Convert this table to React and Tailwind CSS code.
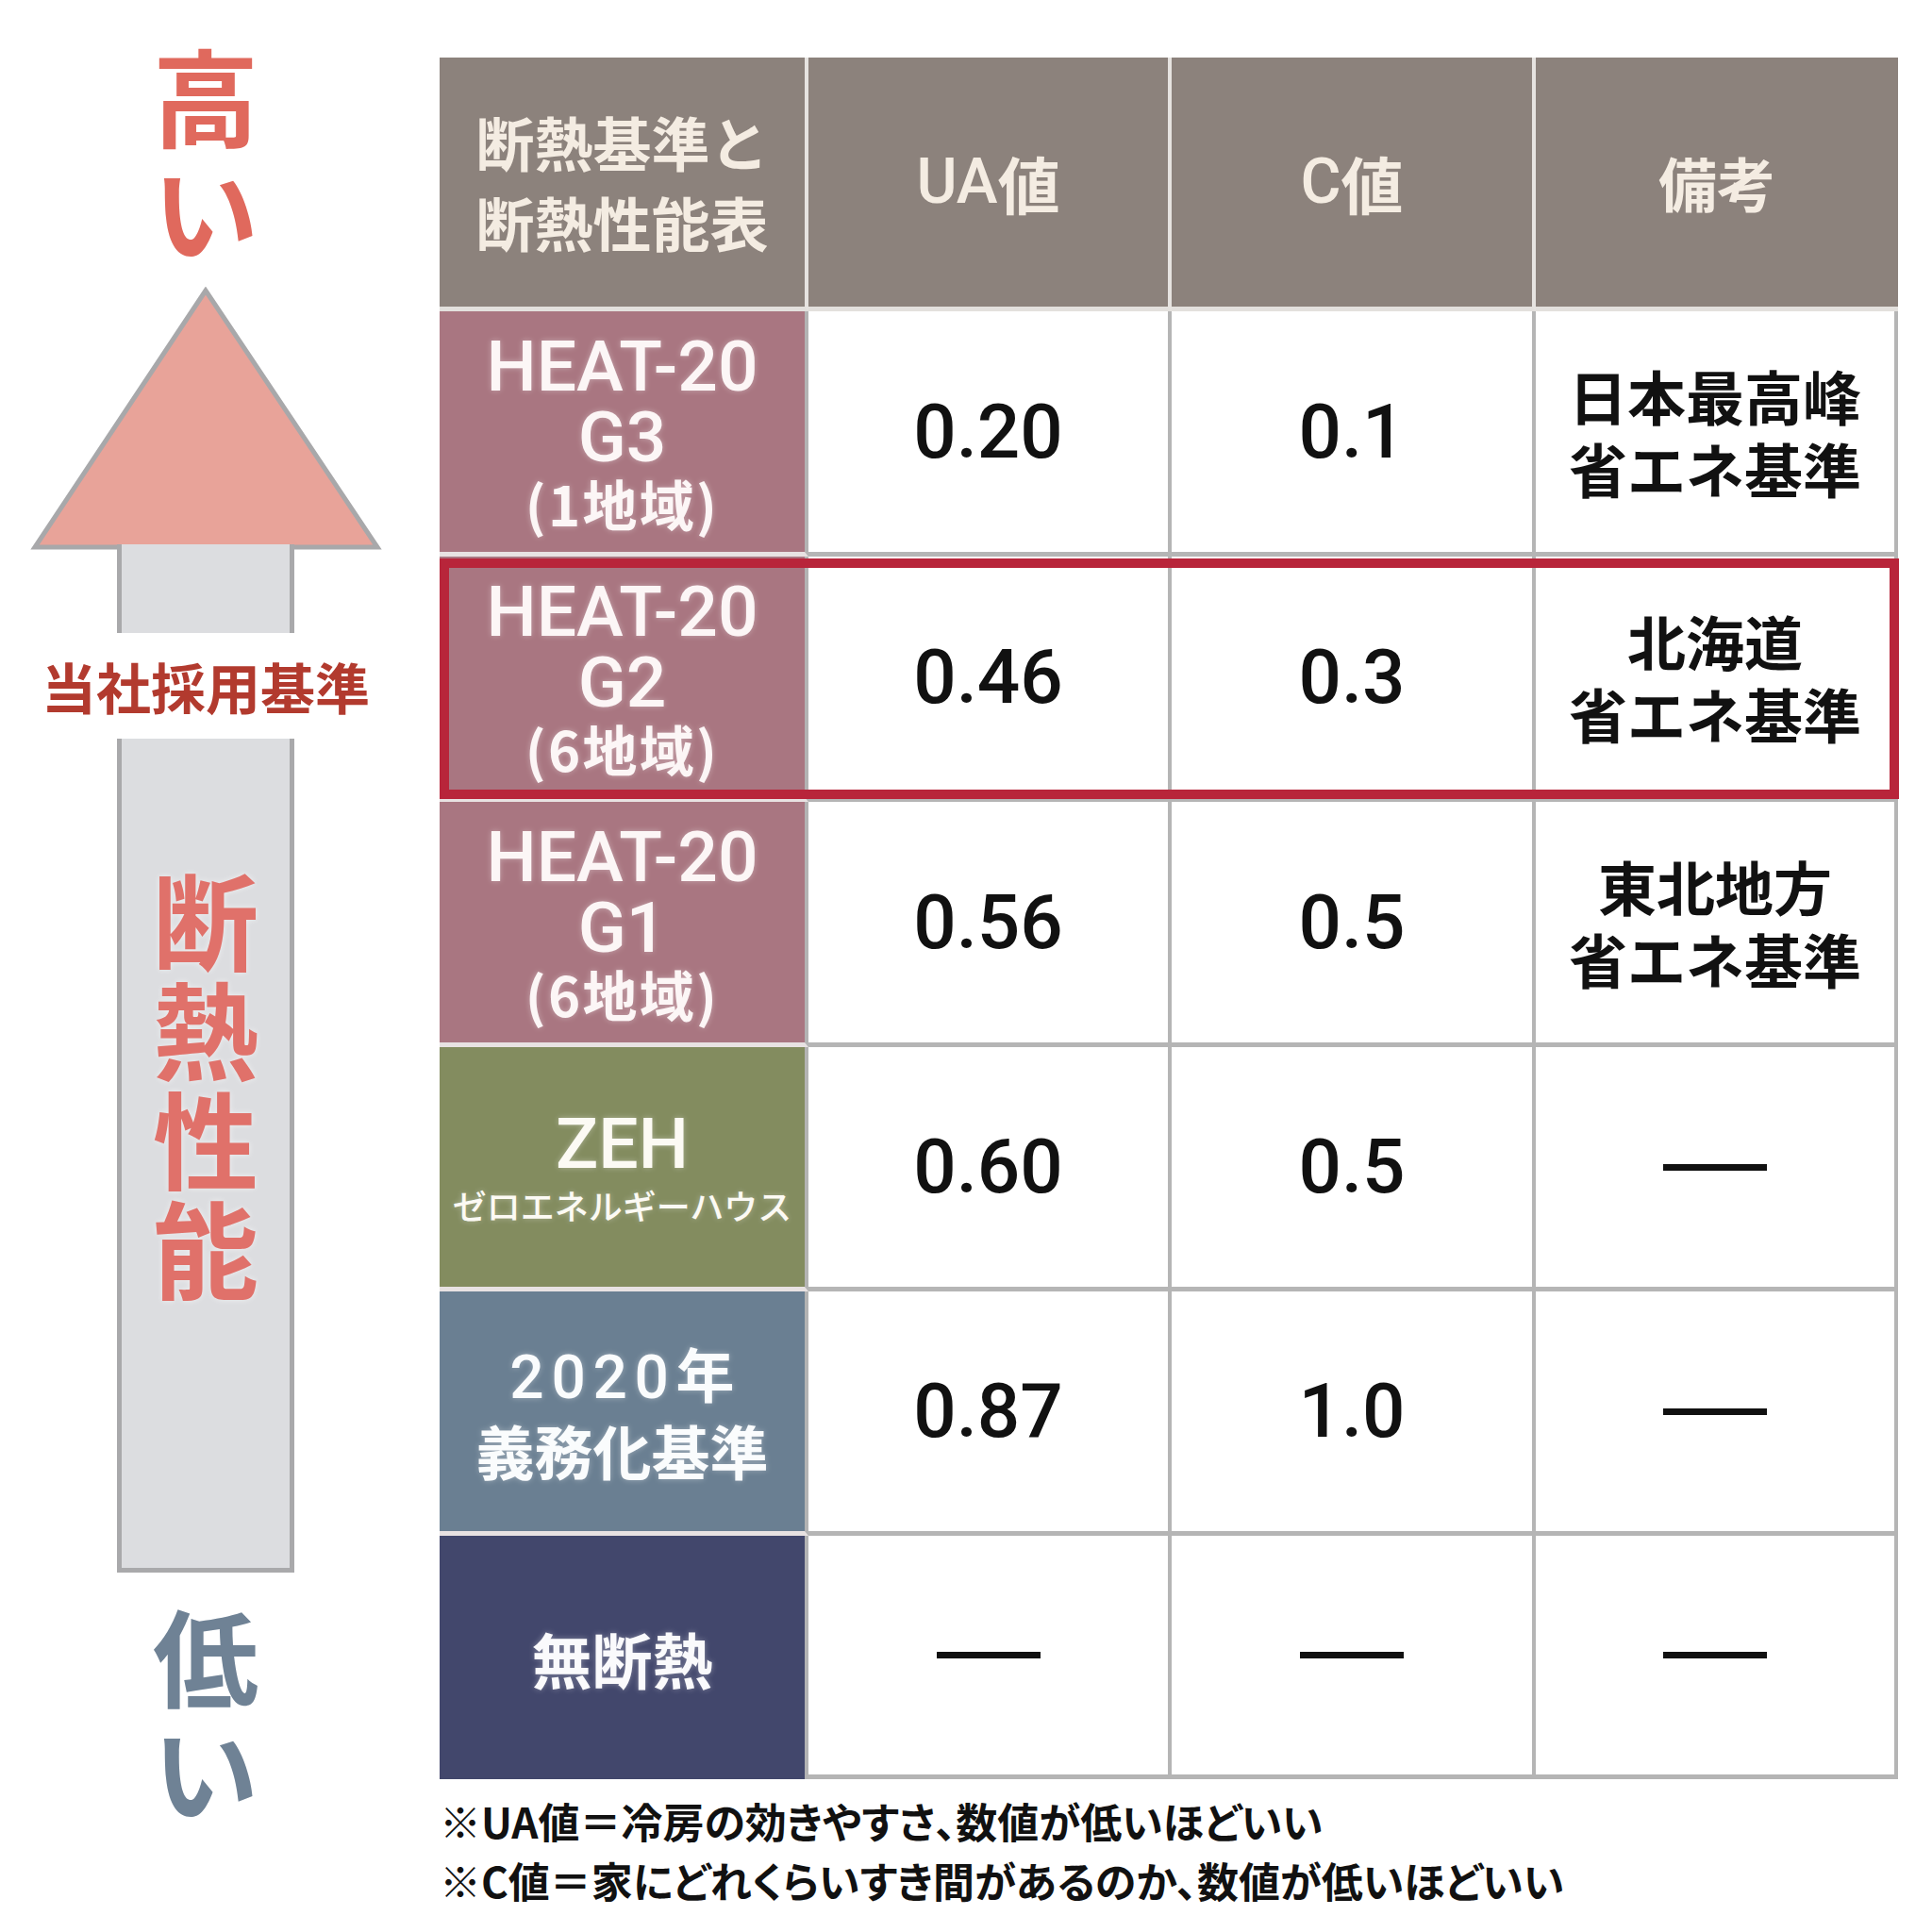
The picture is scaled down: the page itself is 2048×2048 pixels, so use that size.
import React from "react";

const Dash = () => <div className="w-[110px] h-[7px] bg-[#111]" />;

const Val = ({ children }) => (
  <span className="font-['Roboto','Liberation_Sans',sans-serif] font-medium text-[80px] leading-none text-[#111]">
    {children}
  </span>
);

const Note = ({ lines }) => (
  <div className="flex flex-col items-center font-['Noto_Sans_CJK_JP',sans-serif] font-bold text-[62px] leading-[77px] text-[#111]">
    {lines.map((l) => (
      <span key={l}>{l}</span>
    ))}
  </div>
);

const Heat = ({ g, area }) => (
  <div className="flex flex-col items-center text-[#fcf6f6] [text-shadow:0_0_6px_rgba(255,255,255,0.35)]">
    <span className="font-['Roboto','Liberation_Sans',sans-serif] font-medium text-[75px] leading-[76px]">HEAT-20</span>
    <span className="font-['Roboto','Liberation_Sans',sans-serif] font-medium text-[75px] leading-[74px]">{g}</span>
    <span className="font-['Noto_Sans_CJK_JP',sans-serif] font-bold text-[58px] leading-[66px] tracking-[0.04em]">({area}地域)</span>
  </div>
);

const rows = [
  {
    bg: "bg-[#a97681]",
    h: "h-[260px]",
    label: <Heat g="G3" area="1" />,
    ua: <Val>0.20</Val>,
    c: <Val>0.1</Val>,
    note: <Note lines={["日本最高峰", "省エネ基準"]} />,
  },
  {
    bg: "bg-[#a97681]",
    h: "h-[260px]",
    label: <Heat g="G2" area="6" />,
    ua: <Val>0.46</Val>,
    c: <Val>0.3</Val>,
    note: <Note lines={["北海道", "省エネ基準"]} />,
    hl: true,
  },
  {
    bg: "bg-[#a97681]",
    h: "h-[260px]",
    label: <Heat g="G1" area="6" />,
    ua: <Val>0.56</Val>,
    c: <Val>0.5</Val>,
    note: <Note lines={["東北地方", "省エネ基準"]} />,
  },
  {
    bg: "bg-[#838c5f]",
    h: "h-[259px]",
    label: (
      <div className="flex flex-col items-center text-[#fcfaf4] [text-shadow:0_0_6px_rgba(255,255,255,0.35)]">
        <span className="font-['Roboto','Liberation_Sans',sans-serif] font-medium text-[75px] leading-[80px]">ZEH</span>
        <span className="font-['Noto_Sans_CJK_JP',sans-serif] font-medium text-[36px] leading-[50px]">ゼロエネルギーハウス</span>
      </div>
    ),
    ua: <Val>0.60</Val>,
    c: <Val>0.5</Val>,
    note: <Dash />,
  },
  {
    bg: "bg-[#6a7f92]",
    h: "h-[259px]",
    label: (
      <div className="flex flex-col items-center text-[#fafcfd] font-['Noto_Sans_CJK_JP',sans-serif] font-bold text-[62px] leading-[77px] [text-shadow:0_0_6px_rgba(255,255,255,0.35)]">
        <span>
          <span className="font-['Roboto','Liberation_Sans',sans-serif] font-medium text-[64px] tracking-[0.12em]">2020</span>年
        </span>
        <span>義務化基準</span>
      </div>
    ),
    ua: <Val>0.87</Val>,
    c: <Val>1.0</Val>,
    note: <Dash />,
  },
  {
    bg: "bg-[#42476c]",
    h: "h-[258px]",
    label: (
      <span className="text-[#fafafc] font-['Noto_Sans_CJK_JP',sans-serif] font-bold text-[64px] leading-none [text-shadow:0_0_6px_rgba(255,255,255,0.35)]">
        無断熱
      </span>
    ),
    ua: <Dash />,
    c: <Dash />,
    note: <Dash />,
    last: true,
  },
];

export default function App() {
  return (
    <div className="w-[2048px] h-[2048px] bg-white flex font-['Noto_Sans_CJK_JP',sans-serif]">
      {/* left indicator */}
      <div className="w-[436px] mr-[30px] flex flex-col items-center">
        <div className="mt-[38px] flex flex-col items-center text-[112px] leading-[122px] font-bold text-[#e0695d]">
          <span>高</span>
          <span>い</span>
        </div>
        <svg className="mt-[22px] block" width="436" height="280" viewBox="0 0 436 280">
          <polygon points="218,4 37,276 400,276" fill="#e8a399" stroke="#a8a8aa" strokeWidth="5" />
        </svg>
        <div className="-mt-[7px] w-[188px] h-[94px] bg-[#dcdde0] border-x-[5px] border-[#a9a9ab]" />
        <div className="h-[112px] flex items-center justify-center whitespace-nowrap text-[58px] leading-none font-bold text-[#b23a2e] [text-shadow:0_0_4px_rgba(255,255,255,0.9)]">
          当社採用基準
        </div>
        <div className="w-[188px] h-[884px] bg-[#dcdde0] border-x-[5px] border-b-[5px] border-[#a9a9ab] pt-[131px] flex flex-col items-center text-[112px] leading-[116px] font-bold text-[#e0716a] [text-shadow:0_0_6px_rgba(255,255,255,0.6)]">
          <span>断</span>
          <span>熱</span>
          <span>性</span>
          <span>能</span>
        </div>
        <div className="mt-[25px] flex flex-col items-center text-[112px] leading-[122px] font-bold text-[#6f8295]">
          <span>低</span>
          <span>い</span>
        </div>
      </div>

      {/* table + notes */}
      <div className="pt-[61px] flex flex-col">
        <div className="w-[1546px] flex flex-col">
          {/* header */}
          <div className="grid grid-cols-[391px_385px_386px_384px] h-[269px]">
            <div className="bg-[#8c827c] border-r-4 border-b-[5px] border-r-[#e6e3e0] border-b-[#e3e0dd] flex flex-col items-center justify-center text-[#f4ece2] font-bold text-[62px] leading-[85px]">
              <span>断熱基準と</span>
              <span>断熱性能表</span>
            </div>
            <div className="bg-[#8c827c] border-r-4 border-b-[5px] border-r-[#e6e3e0] border-b-[#e3e0dd] flex items-center justify-center text-[#f4ece2] font-bold text-[66px] leading-none">
              <span className="font-['Roboto','Liberation_Sans',sans-serif] font-medium">UA</span>
              <span>値</span>
            </div>
            <div className="bg-[#8c827c] border-r-4 border-b-[5px] border-r-[#e6e3e0] border-b-[#e3e0dd] flex items-center justify-center text-[#f4ece2] font-bold text-[66px] leading-none">
              <span className="font-['Roboto','Liberation_Sans',sans-serif] font-medium">C</span>
              <span>値</span>
            </div>
            <div className="bg-[#8c827c] border-b-[5px] border-b-[#e3e0dd] flex items-center justify-center text-[#f4ece2] font-bold text-[62px] leading-none">
              備考
            </div>
          </div>

          {rows.map((r, i) => (
            <div key={i} className={`relative grid grid-cols-[391px_385px_386px_384px] ${r.h}`}>
              <div
                className={`${r.bg} border-r-4 border-r-[#b3b3b3] ${
                  r.last ? "" : "border-b-[5px] border-b-[#e8e2e2]"
                } flex items-center justify-center`}
              >
                {r.label}
              </div>
              <div className="bg-white border-r-4 border-b-[5px] border-[#b5b5b5] flex items-center justify-center">
                {r.ua}
              </div>
              <div className="bg-white border-r-4 border-b-[5px] border-[#b5b5b5] flex items-center justify-center">
                {r.c}
              </div>
              <div className="bg-white border-r-4 border-b-[5px] border-[#b5b5b5] flex items-center justify-center">
                {r.note}
              </div>
              {r.hl && (
                <div className="absolute left-0 top-[2px] right-[-1px] bottom-[3px] border-[10px] border-[#b8253a] pointer-events-none" />
              )}
            </div>
          ))}
        </div>

        {/* footnotes */}
        <div className="mt-[13px] flex flex-col font-bold text-[44px] leading-[63px] text-[#111] whitespace-nowrap [font-feature-settings:'palt']">
          <span>※UA値＝冷房の効きやすさ、数値が低いほどいい</span>
          <span>※C値＝家にどれくらいすき間があるのか、数値が低いほどいい</span>
        </div>
      </div>
    </div>
  );
}
